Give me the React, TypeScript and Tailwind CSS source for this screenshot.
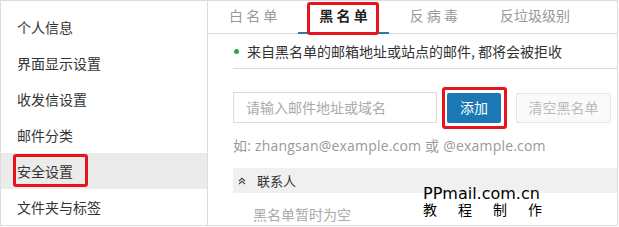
import React from "react";

const menu = ["个人信息", "界面显示设置", "收发信设置", "邮件分类", "安全设置", "文件夹与标签"];
const tabs = ["白 名 单", "黑 名 单", "反 病 毒", "反垃圾级别"];

export default function App() {
  const font = { fontFamily: '"Noto Sans CJK SC", "Noto Sans", sans-serif' };
  return (
    <div className="relative flex h-[226px] w-[618px] overflow-hidden border border-[#dcdcdc] bg-white text-[#333]" style={font}>
      {/* sidebar */}
      <div className="w-[207px] shrink-0 border-r border-[#dcdcdc] pt-[8px]">
        {menu.map((m, i) => (
          <div
            key={m}
            className={`relative flex h-9 items-center pl-[16px] text-[14px] ${i === 4 ? "bg-[#ebebeb]" : ""}`}
          >
            {m}
            {i === 4 && (
              <span className="absolute left-[12px] top-[1px] h-[33px] w-[75px] rounded-[3px] border-[3px] border-[#e8141b]" />
            )}
          </div>
        ))}
      </div>

      {/* main */}
      <div className="flex min-w-0 flex-1 flex-col">
        <div className="flex h-[33px] border-b border-[#dcdcdc]">
          {tabs.map((t, i) => (
            <div
              key={t}
              className={`relative flex items-center whitespace-pre px-[21px] pb-[3px] text-[14px] ${
                i === 1 ? "font-bold text-[#222]" : "text-[#999]"
              }`}
            >
              {t}
              {i === 1 && (
                <>
                  <span className="absolute bottom-[-1px] left-0 right-0 h-[2px] bg-[#2b7aa6]" />
                  <span className="absolute left-[9px] top-[1px] h-[33px] w-[72px] rounded-[3px] border-[3px] border-[#e8141b]" />
                </>
              )}
            </div>
          ))}
        </div>

        <div className="ml-[25px] flex h-[35px] items-center border-b border-[#dcdcdc] text-[14px] text-[#333]">
          <span className="ml-[1px] mr-[8px] h-[5px] w-[5px] rounded-full bg-[#3aa335]" />
          来自黑名单的邮箱地址或站点的邮件, 都将会被拒收
        </div>

        <div className="ml-[25px] mt-[23px] flex items-center">
          <div className="flex h-[31px] w-[204px] items-center border border-[#dcdcdc] pl-[12px] text-[14px] text-[#aaa]">
            请输入邮件地址或域名
          </div>
          <div className="relative ml-[10px]">
            <button className="flex h-[30px] w-[54px] items-center justify-center rounded-[2px] bg-[#1b78b5] text-[14px] text-white">
              添加
            </button>
            <span className="absolute left-[-5px] top-[-6px] h-[42px] w-[65px] rounded-[3px] border-[3px] border-[#e8141b]" />
          </div>
          <button className="ml-[15px] flex h-[30px] w-[95px] items-center justify-center rounded-[2px] border border-[#e6e6e6] bg-[#fafafa] text-[14px] text-[#bbb]">
            清空黑名单
          </button>
        </div>

        <div
          className="ml-[25px] mt-[12px] text-[14px] leading-[22px] tracking-[0.2px] text-[#999]"
          style={{ fontFamily: '"Open Sans", "Noto Sans CJK SC", sans-serif' }}
        >
          如: zhangsan@example.com 或 @example.com
        </div>

        <div className="ml-[25px] mt-[11px] flex h-[25px] items-center bg-[#f0f0f0] text-[13px] text-[#333]">
          <svg className="ml-[5px] mr-[11px]" width="8" height="8" viewBox="0 0 8 8" fill="none" stroke="#444" strokeWidth="1.1">
            <path d="M1 4L4 1.3L7 4" />
            <path d="M1 7L4 4.3L7 7" />
          </svg>
          联系人
        </div>

        <div className="ml-[45px] mt-[11px] text-[14px] text-[#aaa]">黑名单暂时为空</div>
      </div>

      {/* watermark */}
      <div className="absolute left-[422px] top-[184px] w-[119px] text-black">
        <div className="text-[16px] leading-[17px]" style={{ fontFamily: '"DejaVu Sans", sans-serif' }}>
          PPmail.com.cn
        </div>
        <div className="flex justify-between text-[14px] leading-[14px]">
          <span>教</span>
          <span>程</span>
          <span>制</span>
          <span>作</span>
        </div>
      </div>
    </div>
  );
}
